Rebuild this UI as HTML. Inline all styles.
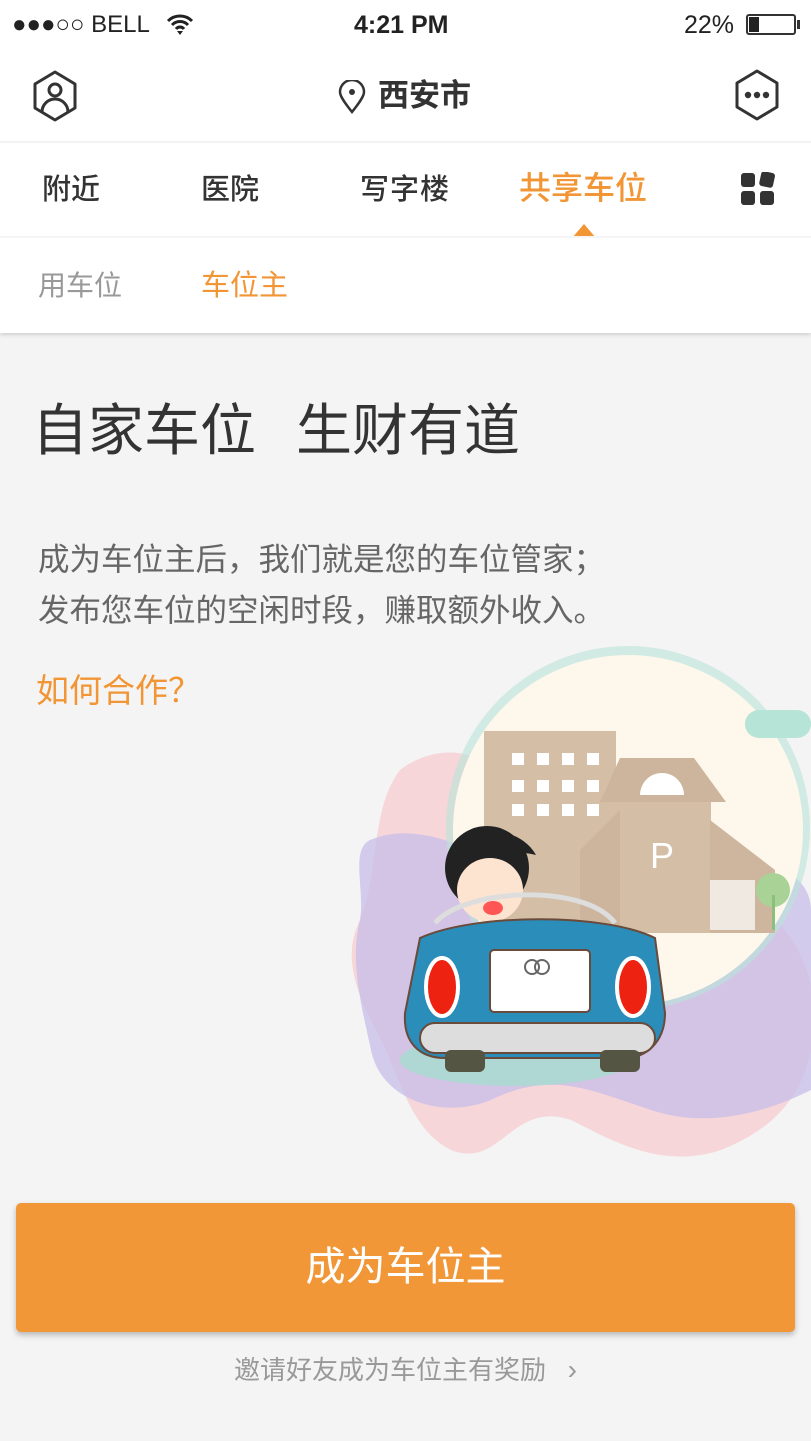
<!DOCTYPE html>
<html><head><meta charset="utf-8"><style>
*{margin:0;padding:0;box-sizing:border-box}
body{width:811px;height:1441px;background:#f4f4f4;font-family:"Liberation Sans","Noto Sans CJK SC",sans-serif;position:relative;overflow:hidden;color:#333}
.abs{position:absolute}
.top{left:0;top:0;width:811px;height:333px;background:#fff;box-shadow:0 2px 4px rgba(0,0,0,.15)}
.tab{position:absolute;top:170px;font-size:29px;color:#333;line-height:40px;font-weight:500}
.cjk{font-family:"Noto Sans CJK SC",sans-serif}
</style></head><body>
<div class="abs top"></div>
<div class="abs" style="left:12px;top:10px;font-size:24px;color:#222;line-height:30px">●●●○○ BELL</div>
<svg class="abs" style="left:166px;top:12px" width="28" height="24" viewBox="0 0 28 24"><path d="M2 9a17 17 0 0 1 24 0M6 13a11 11 0 0 1 16 0M10 17a5 5 0 0 1 8 0" stroke="#222" stroke-width="3" fill="none"/><path d="M11 19l3 4 3-4z" fill="#222"/></svg>
<div class="abs" style="left:354px;top:10px;font-size:25px;color:#222;line-height:30px;font-weight:bold">4:21 PM</div>
<div class="abs" style="left:684px;top:10px;font-size:25px;color:#222;line-height:30px">22%</div>
<div class="abs" style="left:746px;top:14px;width:50px;height:21px;border:2px solid #333;border-radius:3px"><div style="width:10px;height:15px;background:#222;margin:1px"></div></div>
<div class="abs" style="left:797px;top:20px;width:3px;height:9px;background:#333"></div>
<svg class="abs" style="left:31px;top:70px" width="48" height="52" viewBox="0 0 48 52"><path d="M24 2L44 14V38L24 50L4 38V14Z" fill="none" stroke="#333" stroke-width="3" stroke-linejoin="round"/><circle cx="24" cy="20" r="6" fill="none" stroke="#333" stroke-width="3"/><path d="M11 42a13 13 0 0 1 26 0" fill="none" stroke="#333" stroke-width="3"/></svg>
<svg class="abs" style="left:337px;top:80px" width="30" height="34" viewBox="0 0 30 34"><path d="M15 32C7 22 3 16 3 12a12 12 0 0 1 24 0c0 4-4 10-12 20z" fill="none" stroke="#333" stroke-width="2.5"/><circle cx="15" cy="12" r="3" fill="#333"/></svg>
<div class="abs" style="left:378px;top:76px;font-size:31px;line-height:40px;color:#333;font-weight:bold">西安市</div>
<svg class="abs" style="left:733px;top:69px" width="48" height="52" viewBox="0 0 48 52"><path d="M24 2L44 14V38L24 50L4 38V14Z" fill="none" stroke="#333" stroke-width="3" stroke-linejoin="round"/><circle cx="15" cy="26" r="3.2" fill="#333"/><circle cx="24" cy="26" r="3.2" fill="#333"/><circle cx="33" cy="26" r="3.2" fill="#333"/></svg>
<div class="abs" style="left:0;top:141px;width:811px;height:2px;background:#f3f3f3"></div>
<div class="tab" style="left:42px">附近</div>
<div class="tab" style="left:201px">医院</div>
<div class="tab" style="left:360px;letter-spacing:1px">写字楼</div>
<div class="tab" style="left:519px;top:168px;color:#f19535;font-size:32px">共享车位</div>
<svg class="abs" style="left:740px;top:172px" width="36" height="34" viewBox="0 0 36 34"><rect x="1" y="1" width="14" height="14" rx="3" fill="#333"/><rect x="20" y="0" width="14" height="15" rx="3" fill="#333" transform="rotate(12 27 8)"/><rect x="1" y="19" width="14" height="14" rx="3" fill="#333"/><rect x="20" y="19" width="14" height="14" rx="3" fill="#333"/></svg>
<svg class="abs" style="left:572px;top:224px" width="24" height="14"><path d="M12 0L24 14H0Z" fill="#f19535"/></svg>
<div class="abs" style="left:0;top:236px;width:811px;height:2px;background:#f5f5f5"></div>
<div class="abs" style="left:38px;top:266px;font-size:28px;line-height:40px;color:#999">用车位</div>
<div class="abs" style="left:201px;top:266px;font-size:29px;line-height:40px;color:#f19535">车位主</div>
<div class="abs" style="left:32px;top:398px;font-size:56px;line-height:66px;color:#333;white-space:pre">自家车位<span style="display:inline-block;width:40px"></span>生财有道</div>
<div class="abs cjk" style="left:38px;top:532px;font-size:31.5px;line-height:51px;color:#666;white-space:nowrap">成为车位主后，我们就是您的车位管家；<br>发布您车位的空闲时段，赚取额外收入。</div>
<div class="abs cjk" style="left:36px;top:665px;font-size:33px;line-height:46px;color:#f19535">如何合作？</div>
<svg class="abs" style="left:340px;top:640px" width="471" height="540" viewBox="0 0 471 540">
<path d="M60 130c40-30 90-20 110 20 40 80 110 60 180 80 80 20 140 90 121 180-10 50-40 80-90 100-60 20-110-10-150-30-60-20-70 50-120 30-40-20-50-70-70-110C20 360 0 320 20 280 40 230 30 170 60 130z" fill="#f6d3d6" opacity=".9"/>
<path d="M30 200c50-20 90 10 140 20 80 20 160 10 230 0 40 0 71 20 71 50v180c-40 20-100 40-160 20-60-20-100-40-160-10-50 20-110 0-120-50C20 360 10 320 20 280 25 250 10 210 30 200z" fill="#c7bde8" opacity=".75"/>
<circle cx="288" cy="188" r="182" fill="#b9e5d9" opacity=".6"/>
<circle cx="288" cy="190" r="175" fill="#fdf7ec"/>
<rect x="405" y="70" width="66" height="28" rx="14" fill="#b6e4d6"/>
<rect x="144" y="91" width="132" height="203" fill="#d4bea6"/>
<g fill="#fff">
<rect x="172" y="113" width="12" height="12"/><rect x="197" y="113" width="12" height="12"/><rect x="222" y="113" width="12" height="12"/><rect x="247" y="113" width="12" height="12"/>
<rect x="172" y="140" width="12" height="12"/><rect x="197" y="140" width="12" height="12"/><rect x="222" y="140" width="12" height="12"/><rect x="247" y="140" width="12" height="12"/>
<rect x="172" y="164" width="12" height="12"/><rect x="197" y="164" width="12" height="12"/><rect x="222" y="164" width="12" height="12"/><rect x="247" y="164" width="12" height="12"/>
</g>
<path d="M260 162l20-44h74l32 44z" fill="#ccb59c"/>
<rect x="276" y="162" width="95" height="131" fill="#d4bea6"/>
<path d="M240 210l40-40v123h-40z" fill="#ccb59c"/>
<path d="M370 180l65 50v63h-65z" fill="#cdb69d"/>
<rect x="370" y="240" width="45" height="50" fill="#fff" opacity=".7"/>
<path d="M300 155a22 22 0 0 1 44 0z" fill="#fff"/>
<text x="310" y="228" font-size="36" fill="#fff" font-family="Liberation Sans">P</text>
<circle cx="433" cy="250" r="17" fill="#a8d296"/><rect x="432" y="255" width="3" height="35" fill="#8cbf7b"/>
<circle cx="147" cy="228" r="42" fill="#222"/>
<ellipse cx="150" cy="250" rx="33" ry="32" fill="#fde4d0"/>
<path d="M106 225c10-40 70-45 90-10-20-5-60-5-90 10z" fill="#222"/>
<ellipse cx="153" cy="268" rx="10" ry="7" fill="#f55"/>
<ellipse cx="175" cy="420" rx="115" ry="26" fill="#9fe0cc" opacity=".7"/>
<path d="M95 283c30-35 150-40 180 0" fill="none" stroke="#ddd" stroke-width="5"/>
<path d="M80 298c55-25 185-25 235 0l10 75c0 30-20 45-40 45H105c-25 0-42-15-40-45z" fill="#2a8dba" stroke="#6a4a3a" stroke-width="2"/>
<rect x="150" y="310" width="100" height="62" rx="4" fill="#fff" stroke="#6a4a3a" stroke-width="2"/>
<circle cx="192" cy="327" r="7" fill="none" stroke="#666" stroke-width="2"/><circle cx="202" cy="327" r="7" fill="none" stroke="#666" stroke-width="2"/>
<ellipse cx="102" cy="347" rx="16" ry="29" fill="#e21" stroke="#fff" stroke-width="4"/>
<ellipse cx="293" cy="347" rx="16" ry="29" fill="#e21" stroke="#fff" stroke-width="4"/>
<rect x="80" y="383" width="235" height="30" rx="15" fill="#ddd" stroke="#6a4a3a" stroke-width="2"/>
<rect x="105" y="410" width="40" height="22" rx="6" fill="#554"/>
<rect x="260" y="410" width="40" height="22" rx="6" fill="#554"/>
</svg>
<div class="abs" style="left:16px;top:1203px;width:779px;height:129px;background:#f19738;border-radius:5px;box-shadow:0 3px 6px rgba(0,0,0,.25);color:#fff;font-size:40px;line-height:129px;text-align:center">成为车位主</div>
<div class="abs" style="left:0;top:1352px;width:811px;text-align:center;font-size:26px;line-height:36px;color:#999">邀请好友成为车位主有奖励&nbsp;&nbsp;&nbsp;<span style="font-size:28px">›</span></div>
</body></html>
